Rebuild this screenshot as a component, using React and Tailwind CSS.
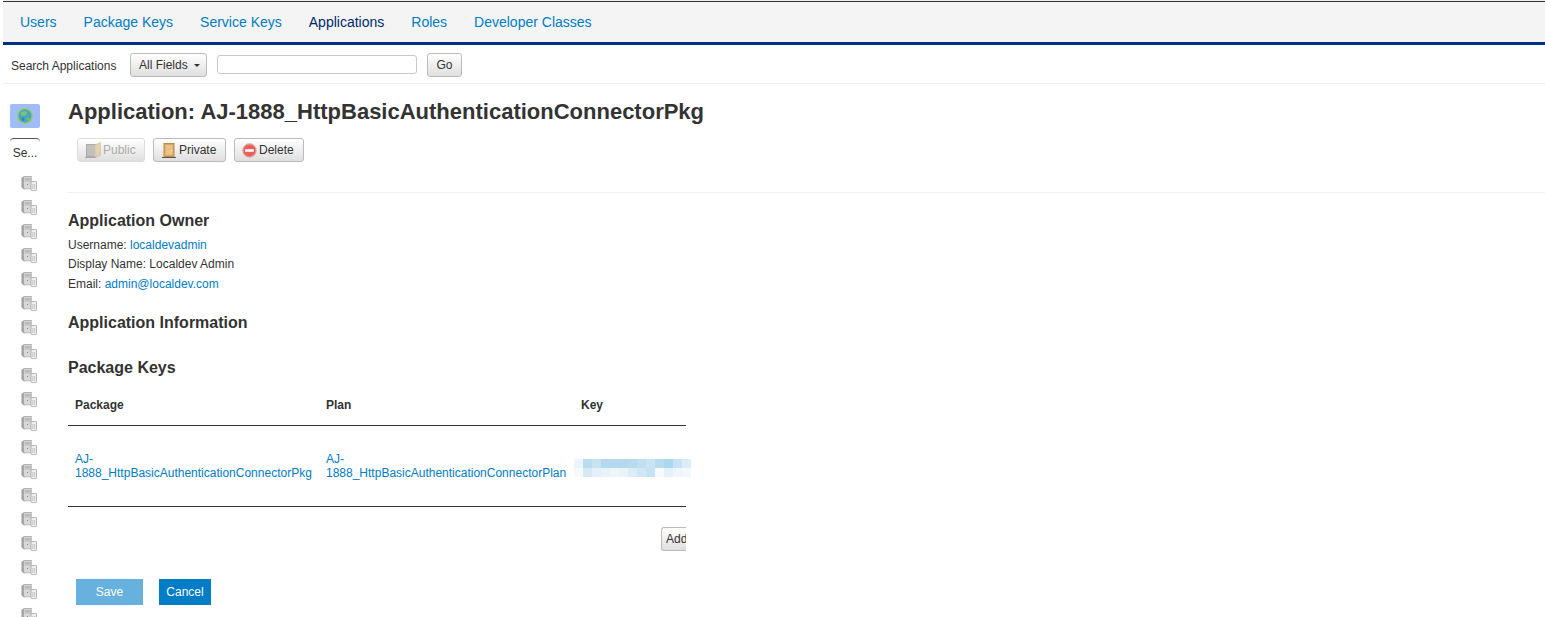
const font = "font-['Liberation_Sans',Arial,sans-serif]";

const Server = () => (
  <svg width="16" height="16" viewBox="0 0 16 16" className="block">
    <path d="M0.8 3 L3 1.5 L10.5 1.5 L10.5 13.5 L3 14 L0.8 12.5 Z" fill="#a8a8a8" stroke="#999999" strokeWidth="0.6" />
    <rect x="3" y="2" width="7.5" height="11.5" fill="#d8d8d8" />
    <rect x="3.5" y="3.5" width="6.5" height="1" fill="#9a9a9a" />
    <rect x="3.5" y="5.5" width="6.5" height="1" fill="#b4b4b4" />
    <rect x="6" y="9" width="1" height="1" fill="#3fbf3f" />
    <rect x="10" y="6.5" width="5.5" height="9" rx="0.6" fill="#f1f1f1" stroke="#9a9a9a" strokeWidth="0.7" />
    <path d="M11.8 9 V14 M13.7 9 V14" stroke="#b5b5b5" strokeWidth="0.8" />
  </svg>
);

const Globe = () => (
  <svg width="16" height="16" viewBox="0 0 16 16" className="block">
    <circle cx="8" cy="8" r="7.2" fill="#4aa3c7" stroke="#8fcf5a" strokeWidth="1.4" />
    <path d="M4 4.5 C7 2.5 10 3 10.5 5 C9 6 9 8 7 8 C5.5 8 5 6.5 3.5 7 Z" fill="#7cc27d" />
    <path d="M9 10 C11 9 13 9.5 13 11 C12 13 10 13.5 9.5 12.5 Z" fill="#6fb873" />
    <circle cx="6" cy="11" r="1.5" fill="#2f86b5" />
  </svg>
);

const DoorOpen = () => (
  <svg width="18" height="16" viewBox="0 0 18 16" className="block">
    <rect x="1.5" y="2.5" width="10" height="12" fill="#b5b5b5" stroke="#9b9b9b" />
    <path d="M10 3 L15.5 0.5 V13.5 L10 15.5 Z" fill="#e2c9a4" stroke="#d2b48c" strokeWidth="0.7" />
    <rect x="11.5" y="8" width="1" height="1" fill="#f0e0a0" />
    <path d="M0 15.5 H11" stroke="#9b9b9b" />
  </svg>
);

const Door = () => (
  <svg width="16" height="16" viewBox="0 0 16 16" className="block">
    <rect x="3" y="1.5" width="10" height="13" fill="#dca466" stroke="#c08a4a" />
    <rect x="4.5" y="3" width="7" height="10" fill="#ecc186" />
    <rect x="9.8" y="8" width="1.2" height="1.2" fill="#fff2a0" />
    <path d="M1 15.5 H15" stroke="#555" />
  </svg>
);

const DeleteIcon = () => (
  <svg width="15" height="15" viewBox="0 0 15 15" className="block">
    <circle cx="7.5" cy="7.5" r="6.6" fill="#e8605a" stroke="#e0a39c" strokeWidth="1.2" />
    <rect x="3.2" y="6.2" width="8.6" height="2.6" fill="#fff" />
  </svg>
);

const btn = "flex items-center rounded-[3px] border border-[#bbbbbb] bg-gradient-to-b from-[#ffffff] to-[#dfdfdf] text-[12px] text-[#333333]";

const keyRows = [
  ["#ebf5fb", "#b9dcf0", "#c6e3f3", "#b4d9ee", "#b4d9ee", "#b4d9ee", "#b6daef", "#c0dff1", "#c9e4f3", "#b7dbef", "#aed6ed", "#c6e3f3", "#dcedf7"],
  ["#f6fafd", "#d6eaf6", "#e3f0f9", "#e7f2fa", "#eef6fb", "#e8f3fa", "#dcedf7", "#d1e7f5", "#c6e3f3", "#f6fafd", "#e5f1f9", "#eef6fb", "#f2f8fc"],
];

const Link = ({ children }) => <span className="text-[#007dc6]">{children}</span>;

export default function App() {
  return (
    <div className={`${font} h-[617px] w-[1545px] overflow-hidden bg-white pl-[3px] text-[#333333]`}>
      <div className="h-[2px] border-b border-[#333333] bg-[#eeeeee]" />
      <nav className="flex h-[43px] items-center gap-[27px] border-b-[3px] border-[#003082] bg-[#f4f4f4] pl-[17px] text-[14px] text-[#007dc6]">
        <span>Users</span>
        <span>Package Keys</span>
        <span>Service Keys</span>
        <span className="text-[#002a6e]">Applications</span>
        <span>Roles</span>
        <span>Developer Classes</span>
      </nav>

      <div className="flex h-[39px] items-center border-b border-[#efefef] pl-[8px] pt-[2px] text-[12px]">
        <span className="mt-[2px] w-[119px]">Search Applications</span>
        <div className={`${btn} -mt-[1px] h-[24px] w-[77px] gap-[6px] pl-[8px]`}>
          <span>All Fields</span>
          <span className="mt-[2px] h-0 w-0 border-x-[3px] border-t-[3px] border-x-transparent border-t-[#333333]" />
        </div>
        <div className="ml-[10px] -mt-[1px] h-[19px] w-[200px] rounded-[3px] border border-[#c4c8d4] bg-white" />
        <div className={`${btn} ml-[10px] -mt-[1px] h-[24px] w-[35px] justify-center`}>Go</div>
      </div>

      <div className="flex">
        <aside className="flex w-[65px] shrink-0 flex-col pl-[7px] pt-[20px]">
          <div className="flex h-[24px] w-[30px] items-center justify-center rounded-[2px] bg-[#a0bdf8]">
            <Globe />
          </div>
          <div className="mt-[10px] w-[30px] rounded-t-[4px] border-t border-[#555555] pt-[7px] text-center text-[12px] leading-[14px]">Se...</div>
          <div className="mt-[15px] flex flex-col gap-[8px] pl-[11px]">
            {Array.from({ length: 19 }).map((_, i) => <Server key={i} />)}
          </div>
        </aside>

        <main className="min-w-0 flex-1">
          <h1 className="mt-[16px] text-[22px] font-bold leading-[24px] text-[#333333]">Application: AJ-1888_HttpBasicAuthenticationConnectorPkg</h1>

          <div className="mt-[14px] flex gap-[8px] pl-[9px]">
            <div className={`${btn} h-[24px] w-[68px] border-[#dddddd] pl-[7px] text-[#aaaaaa]`}>
              <span className="opacity-80"><DoorOpen /></span><span>Public</span>
            </div>
            <div className={`${btn} h-[24px] w-[73px] gap-[2px] pl-[7px]`}><Door /><span>Private</span></div>
            <div className={`${btn} h-[24px] w-[70px] gap-[2px] pl-[7px]`}><DeleteIcon /><span>Delete</span></div>
          </div>

          <div className="mt-[30px] border-t border-[#f0f0f0]" />

          <h2 className="mt-[18px] text-[16px] font-bold leading-[19px]">Application Owner</h2>
          <div className="mt-[5.5px] text-[12px] leading-[19.5px]">
            <div>Username: <Link>localdevadmin</Link></div>
            <div>Display Name: Localdev Admin</div>
            <div>Email: <Link>admin@localdev.com</Link></div>
          </div>

          <h2 className="mt-[18.5px] text-[16px] font-bold leading-[19px]">Application Information</h2>
          <h2 className="mt-[26px] text-[16px] font-bold leading-[19px]">Package Keys</h2>

          <div className="mt-[8px] w-[618px] text-[12px]">
            <div className="flex h-[41px] items-center border-b border-[#333333] pt-[1px] font-bold">
              <span className="w-[258px] shrink-0 pl-[7px]">Package</span>
              <span className="w-[255px] shrink-0">Plan</span>
              <span>Key</span>
            </div>
            <div className="flex h-[81px] items-center border-b border-[#333333] leading-[14px]">
              <span className="w-[258px] shrink-0 pl-[7px] text-[#007dc6]">AJ-<br />1888_HttpBasicAuthenticationConnectorPkg</span>
              <span className="w-[248px] shrink-0 text-[#007dc6]">AJ-<br />1888_HttpBasicAuthenticationConnectorPlan</span>
              <div className="mt-[4px] shrink-0">
                {keyRows.map((row, r) => (
                  <div key={r} className="flex">
                    {row.map((c, i) => (
                      <span key={i} className="h-[9px] w-[9px] shrink-0" style={{ backgroundColor: c }} />
                    ))}
                  </div>
                ))}
              </div>
            </div>
            <div className="mt-[20px] flex justify-end overflow-hidden">
              <div className="flex h-[24px] w-[25px] items-center overflow-hidden rounded-l-[3px] border border-r-0 border-[#bbbbbb] bg-gradient-to-b from-[#ffffff] to-[#dfdfdf] pl-[4px] text-[12px]">Add</div>
            </div>
          </div>

          <div className="mt-[28px] flex gap-[16px] pl-[8px] text-[12px] text-white">
            <div className="flex h-[26px] w-[67px] items-center justify-center bg-[#66b1de]">Save</div>
            <div className="flex h-[26px] w-[52px] items-center justify-center bg-[#007dc6]">Cancel</div>
          </div>
        </main>
      </div>
    </div>
  );
}
